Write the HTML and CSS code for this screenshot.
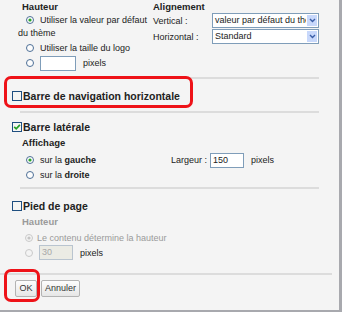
FILE: index.html
```html
<!DOCTYPE html>
<html lang="fr">
<head>
    <meta charset="UTF-8">
    <title>Mise en page</title>
    <link rel="stylesheet" href="styles.css">
</head>
<body>
    <div class="dialog">
        <div class="top">
            <div class="col-left">
                <div class="subhead">Hauteur</div>
                <div class="wrap-opt"><svg class="radio" viewBox="0 0 8 8"><circle cx="4" cy="4" r="3.5" fill="#fdfdfd" stroke="#4d6f96"/><circle cx="4" cy="4" r="1.6" fill="#2aa52a"/></svg>Utiliser la valeur par défaut du thème</div>
                <div class="opt"><svg class="radio" viewBox="0 0 8 8"><circle cx="4" cy="4" r="3.5" fill="#fdfdfd" stroke="#4d6f96"/></svg>Utiliser la taille du logo</div>
                <div class="opt"><svg class="radio" viewBox="0 0 8 8"><circle cx="4" cy="4" r="3.5" fill="#fdfdfd" stroke="#4d6f96"/></svg><span class="field"></span><span class="unit">pixels</span></div>
            </div>
            <div class="col-right">
                <div class="subhead">Alignement</div>
                <div class="pick-row">
                    <span class="pick-label">Vertical :</span>
                    <span class="select"><span class="select-text">valeur par défaut du thème</span><span class="select-btn"><svg width="7" height="5" viewBox="0 0 7 5"><path d="M1 1 L3.5 3.5 L6 1" fill="none" stroke="#3b5fa8" stroke-width="1.4"/></svg></span></span>
                </div>
                <div class="pick-row">
                    <span class="pick-label">Horizontal :</span>
                    <span class="select"><span class="select-text">Standard</span><span class="select-btn"><svg width="7" height="5" viewBox="0 0 7 5"><path d="M1 1 L3.5 3.5 L6 1" fill="none" stroke="#3b5fa8" stroke-width="1.4"/></svg></span></span>
                </div>
            </div>
        </div>
        <div class="sep"></div>

        <div class="section nav">
            <div class="check-row"><svg class="check" viewBox="0 0 10 10"><rect x="0.5" y="0.5" width="9" height="9" fill="#f6f6f4" stroke="#1f4f80"/></svg>Barre de navigation horizontale</div>
        </div>
        <div class="sep"></div>

        <div class="section sidebar">
            <div class="check-row"><svg class="check" viewBox="0 0 10 10"><rect x="0.5" y="0.5" width="9" height="9" fill="#f6f6f4" stroke="#1f4f80"/><path d="M2.2 4.8 L4.2 6.8 L7.9 2.8" fill="none" stroke="#25a025" stroke-width="1.7"/></svg>Barre latérale</div>
            <div class="subhead">Affichage</div>
            <div class="opt first">
                <svg class="radio" viewBox="0 0 8 8"><circle cx="4" cy="4" r="3.5" fill="#fdfdfd" stroke="#4d6f96"/><circle cx="4" cy="4" r="1.6" fill="#2aa52a"/></svg>
                <span class="opt-label">sur la <b>gauche</b></span>
                <span>Largeur :</span><span class="field wide">150</span><span class="unit">pixels</span>
            </div>
            <div class="opt">
                <svg class="radio" viewBox="0 0 8 8"><circle cx="4" cy="4" r="3.5" fill="#fdfdfd" stroke="#4d6f96"/></svg>
                <span class="opt-label">sur la <b>droite</b></span>
            </div>
        </div>
        <div class="sep"></div>

        <div class="section footer">
            <div class="check-row"><svg class="check" viewBox="0 0 10 10"><rect x="0.5" y="0.5" width="9" height="9" fill="#f6f6f4" stroke="#1f4f80"/></svg>Pied de page</div>
            <div class="subhead muted">Hauteur</div>
            <div class="opt muted first">
                <svg class="radio" viewBox="0 0 8 8"><circle cx="4" cy="4" r="3.5" fill="#f4f4f4" stroke="#c9c9c9"/><circle cx="4" cy="4" r="1.6" fill="#c4c4c4"/></svg>Le contenu détermine la hauteur
            </div>
            <div class="opt">
                <svg class="radio" viewBox="0 0 8 8"><circle cx="4" cy="4" r="3.5" fill="#f4f4f4" stroke="#c9c9c9"/></svg><span class="field off">30</span><span class="unit">pixels</span>
            </div>
        </div>
        <div class="sep full"></div>

        <div class="buttons">
            <span class="btn">OK</span>
            <span class="btn">Annuler</span>
        </div>

        <div class="mark mark-nav"></div>
        <div class="mark mark-ok"></div>
    </div>
</body>
</html>
```

FILE: styles.css
```css
body {
    margin: 0;
    font-family: "Liberation Sans", Arial, sans-serif;
    font-size: 9px;
    color: #222;
    background: #f4f4f4;
}
.dialog {
    position: relative;
    width: 339px;
    height: 310px;
    background: #f4f4f4;
    border-right: 3px solid #a8a9ae;
    border-bottom: 2px solid #a8a9ae;
}
.top {
    display: grid;
    grid-template-columns: 135px 1fr;
    height: 77px;
    padding-left: 18px;
}
.subhead {
    height: 13px;
    line-height: 13px;
    padding-left: 4px;
    font-weight: bold;
    font-size: 9.5px;
}
.col-right .subhead {
    padding-left: 0;
}
.radio {
    width: 8px;
    height: 8px;
    flex: none;
    margin: 0 6px 0 8px;
}
.wrap-opt {
    line-height: 13px;
    width: 130px;
    margin-top: 1px;
}
.wrap-opt .radio {
    vertical-align: -1px;
}
.opt {
    display: flex;
    align-items: center;
    height: 14px;
}
.col-left .opt {
    margin-top: 1px;
}
.field {
    width: 32px;
    height: 13px;
    line-height: 13px;
    padding-left: 2px;
    border: 1px solid #7f9db9;
    background: #fff;
    box-sizing: content-box;
}
.field.wide {
    width: 30px;
    margin-left: 3px;
    padding-left: 2px;
}
.unit {
    margin-left: 7px;
}
.pick-row {
    display: flex;
    align-items: center;
    height: 15px;
    margin-bottom: 1px;
}
.pick-label {
    width: 59px;
}
.select {
    display: flex;
    width: 105px;
    height: 13px;
    border: 1px solid #7f9db9;
    background: #fff;
}
.select-text {
    flex: 1;
    overflow: hidden;
    white-space: nowrap;
    padding-left: 2px;
    line-height: 13px;
}
.select-btn {
    width: 12px;
    display: flex;
    align-items: center;
    justify-content: center;
    background: #c8d8fb;
    border: 1px solid #fff;
    box-sizing: border-box;
}
.sep {
    height: 2px;
    width: 299px;
    margin-left: 20px;
    background: #dcdcdc;
}
.sep.full {
    width: 332px;
    margin-left: 0;
}
.section {
    padding-left: 12px;
}
.check-row {
    display: flex;
    align-items: center;
    height: 16px;
    font-weight: bold;
    font-size: 10.5px;
}
.check {
    width: 10px;
    height: 10px;
    margin-right: 1px;
}
.nav {
    padding-top: 9px;
    padding-bottom: 7px;
}
.sidebar {
    padding-top: 6px;
    padding-bottom: 5px;
}
.section .subhead {
    padding-left: 10px;
    height: 15px;
    line-height: 15px;
}
.section .radio {
    margin-left: 14px;
}
.sidebar .opt.first {
    height: 16px;
    margin-top: 2px;
}
.opt-label {
    width: 131px;
}
.footer {
    padding-top: 9px;
    padding-bottom: 13px;
}
.footer .radio {
    margin: 0 6px 0 13px;
}
.footer .opt {
    height: 15px;
}
.footer .opt.first {
    margin-top: 1px;
}
.muted {
    color: #9a9a9a;
}
.footer .muted .radio {
    margin-right: 4px;
}
.field.off {
    width: 30px;
    background: #ebebe4;
    border-color: #b9c4cf;
    color: #a8a8a8;
}
.buttons {
    display: flex;
    gap: 4px;
    padding: 5px 0 0 15px;
}
.btn {
    height: 15px;
    line-height: 15px;
    padding: 0 3px;
    border: 1px solid #b3b3b3;
    border-radius: 2px;
    background: linear-gradient(#fdfdfd, #e6e6e6);
    color: #333;
}
.btn:first-child {
    width: 14px;
    text-align: center;
}
.mark {
    position: absolute;
    border: 3px solid #ee1218;
    border-radius: 7px;
}
.mark-nav {
    left: 4px;
    top: 76px;
    width: 183px;
    height: 26px;
}
.mark-ok {
    left: 4px;
    top: 269px;
    width: 30px;
    height: 27px;
}
```
